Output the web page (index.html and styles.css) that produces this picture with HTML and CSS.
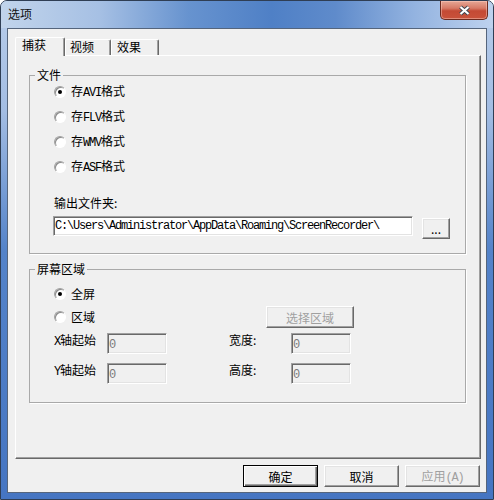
FILE: index.html
```html
<!DOCTYPE html>
<html lang="zh-CN">

<head>
    <meta charset="UTF-8">
    <link rel="stylesheet" href="styles.css">
    <title>选项</title>
</head>

<body>
    <div class="window">
        <div class="titlebar">
            <span class="title">选项</span>
            <button class="close">
                <svg width="13" height="11" viewBox="0 0 13 11">
                    <path d="M2.5 2 L10.5 9 M10.5 2 L2.5 9" stroke="#3c4650" stroke-width="4" />
                    <path d="M2.5 2 L10.5 9 M10.5 2 L2.5 9" stroke="#fff" stroke-width="2.2" />
                </svg>
            </button>
        </div>

        <div class="client">
            <div class="tabs">
                <div class="tab active">捕获</div>
                <div class="tab">视频</div>
                <div class="tab third">效果</div>
            </div>

            <div class="panel">
                <fieldset class="group">
                    <legend>文件</legend>
                    <div class="group-body files">
                        <div class="radios">
                            <label class="radio"><span class="dot checked"></span><span>存<span class="lat">AVI</span>格式</span></label>
                            <label class="radio"><span class="dot"></span><span>存<span class="lat">FLV</span>格式</span></label>
                            <label class="radio"><span class="dot"></span><span>存<span class="lat">WMV</span>格式</span></label>
                            <label class="radio"><span class="dot"></span><span>存<span class="lat">ASF</span>格式</span></label>
                        </div>
                        <div class="caption">输出文件夹:</div>
                        <div class="path-row">
                            <div class="field path">C:\Users\Administrator\AppData\Roaming\ScreenRecorder\</div>
                            <button class="btn browse">...</button>
                        </div>
                    </div>
                </fieldset>

                <fieldset class="group area">
                    <legend>屏幕区域</legend>
                    <div class="group-body">
                        <label class="radio"><span class="dot checked"></span><span>全屏</span></label>
                        <div class="area-row">
                            <label class="radio"><span class="dot"></span><span>区域</span></label>
                            <button class="btn off">选择区域</button>
                        </div>
                        <div class="coords">
                            <span class="label"><span class="lat">X</span>轴起始</span>
                            <div class="field off"><span class="lat">0</span></div>
                            <span class="label">宽度:</span>
                            <div class="field off"><span class="lat">0</span></div>
                            <span class="label"><span class="lat">Y</span>轴起始</span>
                            <div class="field off"><span class="lat">0</span></div>
                            <span class="label">高度:</span>
                            <div class="field off"><span class="lat">0</span></div>
                        </div>
                    </div>
                </fieldset>
            </div>

            <div class="actions">
                <button class="btn default">确定</button>
                <button class="btn">取消</button>
                <button class="btn off">应用<span class="lat">(A)</span></button>
            </div>
        </div>
    </div>
</body>

</html>
```

FILE: styles.css
```css
* {
    margin: 0;
    padding: 0;
    box-sizing: border-box;
}

body {
    width: 494px;
    height: 500px;
    font-family: "Noto Sans CJK SC", sans-serif;
    font-size: 12px;
    color: #000;
    background-color: #fff;
}

button {
    font: inherit;
    color: inherit;
}

.lat {
    font-family: "Liberation Mono", monospace;
    letter-spacing: -1.2px;
}

.window {
    width: 494px;
    height: 500px;
    display: flex;
    flex-direction: column;
    padding: 0 6px 6px;
    border: 1px solid #2f3e54;
    border-radius: 7px 7px 0 0;
    overflow: hidden;
    background: linear-gradient(to bottom, #b8cdea 0, #a3bde3 110px, #5483c9 250px, #4575c2 100%);
}

.titlebar {
    height: 27px;
    margin: 0 -6px;
    padding-left: 7px;
    display: flex;
    justify-content: space-between;
    align-items: flex-start;
    background: linear-gradient(to right, #c1d4eb 0%, #a6c0e4 20%, #6793cf 38%, #4f80c6 55%, #5f8bcb 68%, #93b3e0 84%, #bed2ee 100%);

    .title {
        line-height: 26px;
        color: #111;
    }
}

.close {
    width: 48px;
    height: 19px;
    margin-right: 5px;
    display: flex;
    align-items: center;
    justify-content: center;
    border: 1px solid #6c2b20;
    border-top: none;
    border-radius: 0 0 5px 5px;
    background: linear-gradient(to bottom, #e6a796 0%, #d77a66 40%, #c44a35 55%, #c9523b 100%);
    box-shadow: inset 0 0 0 1px rgba(255, 210, 200, 0.45);
}

.client {
    flex: 1;
    display: flex;
    flex-direction: column;
    padding: 8px 5px 5px 7px;
    border: 1px solid #55657c;
    background-color: #f0f0f0;
}

.tabs {
    height: 18px;
    display: flex;
    align-items: flex-end;

    .tab {
        width: 46px;
        height: 16px;
        padding-left: 4px;
        line-height: 14px;
        border: 1px solid;
        border-color: #fff #696969 transparent #fff;
        border-bottom: none;
        border-radius: 2px 2px 0 0;
        box-shadow: inset -1px 0 #a0a0a0;
    }

    .tab.third {
        width: 48px;
        padding-left: 5px;
    }

    .tab.active {
        width: 50px;
        height: 19px;
        margin-bottom: -1px;
        padding-left: 6px;
        position: relative;
        z-index: 1;
        background-color: #f0f0f0;
    }
}

.panel {
    flex: 1;
    padding: 12px 14px 0 13px;
    border: 1px solid;
    border-color: #fff #696969 #696969 #fff;
    box-shadow: inset -1px -1px #a0a0a0;
}

.group {
    border: 1px solid #a9a9a9;
    box-shadow: 1px 1px 0 #fff;

    legend {
        margin-left: 5px;
        padding: 0 2px;
        line-height: 14px;
    }
}

.group.area {
    margin-top: 8px;
}

.group-body {
    padding: 0 0 14px 24px;
}

.area .group-body {
    padding: 8px 0 18px 24px;
}

.radios {
    display: flex;
    flex-direction: column;
    gap: 5px;
}

.radio {
    height: 20px;
    display: flex;
    align-items: center;
    line-height: 14px;
}

.dot {
    width: 12px;
    height: 12px;
    margin-right: 5px;
    display: flex;
    align-items: center;
    justify-content: center;
    border: 1px solid;
    border-color: #a0a0a0 #fff #fff #a0a0a0;
    border-radius: 50%;
    background-color: #fff;
    box-shadow: inset 1px 1px #8a8a8a;
}

.dot.checked::after {
    content: "";
    width: 4px;
    height: 4px;
    border-radius: 50%;
    background-color: #000;
}

.caption {
    margin-top: 19px;
    line-height: 14px;
}

.field {
    height: 21px;
    padding-left: 1px;
    line-height: 17px;
    border: 1px solid;
    border-color: #a0a0a0 #fff #fff #a0a0a0;
    box-shadow: inset 1px 1px #696969, inset -1px -1px #e3e3e3;
    background-color: #fff;
    white-space: nowrap;
}

.field.off {
    width: 60px;
    color: #7a7a7a;
    background-color: #f0f0f0;
}

.path-row {
    margin-top: 6px;
    display: flex;
    align-items: flex-start;

    .path {
        width: 360px;
        height: 20px;
        margin-left: -1px;
        line-height: 18px;
        font-family: "Liberation Mono", monospace;
        letter-spacing: -1.2px;
    }

    .browse {
        width: 28px;
        height: 21px;
        margin: 2px 0 0 9px;
        line-height: 15px;
    }
}

.btn {
    height: 22px;
    border: 1px solid;
    border-color: #fff #696969 #696969 #fff;
    box-shadow: inset -1px -1px #a0a0a0, inset 1px 1px #e3e3e3;
    background-color: #f0f0f0;
    text-align: center;
}

.btn.off {
    color: #a0a0a0;
}

.btn.default {
    border-color: #000;
    box-shadow: inset 1px 1px #fff, inset -1px -1px #696969, inset -2px -2px #a0a0a0;
}

.area-row {
    margin-top: 2px;
    display: grid;
    grid-template-columns: 212px 88px;
    align-items: center;
}

.coords {
    margin-top: 5px;
    display: grid;
    grid-template-columns: 53px 122px 62px 60px;
    row-gap: 9px;
    align-items: start;

    .label {
        line-height: 14px;
    }
}

.actions {
    margin: 6px 1px 0 0;
    display: flex;
    justify-content: flex-end;
    gap: 6px;

    .btn {
        width: 75px;
    }
}
```
